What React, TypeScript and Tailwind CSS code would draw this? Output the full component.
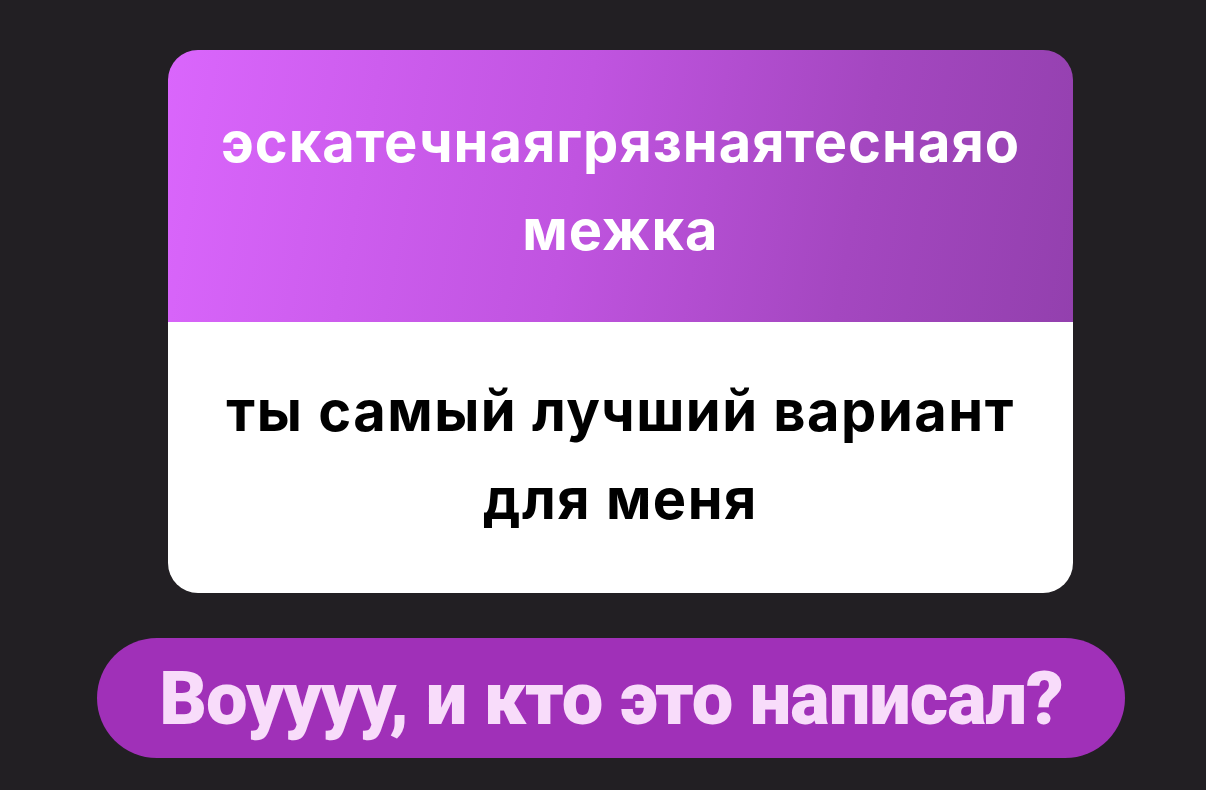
export default function App() {
  return (
    <div className="w-[1206px] h-[790px] bg-[#221f23] flex flex-col overflow-hidden" style={{ fontFamily: "Inter, 'Noto Sans', sans-serif" }}>
      <div className="mt-[50px] ml-[168px] w-[905px] h-[543px] rounded-[30px] overflow-hidden flex flex-col">
        <div className="h-[272px] bg-[linear-gradient(100deg,#da66fc_0%,#c054e0_45%,#a447c0_75%,#9340ae_100%)] flex items-center justify-center">
          <p className="text-white text-[56px] font-bold leading-[88px] text-center tracking-[1px]">
            эскатечнаягрязнаятеснаяо
            <br />
            межка
          </p>
        </div>
        <div className="flex-1 bg-white flex items-center justify-center">
          <p className="text-black text-[56px] font-bold leading-[88px] text-center tracking-[1.5px] -mt-[6px]">
            ты самый лучший вариант
            <br />
            для меня
          </p>
        </div>
      </div>
      <div className="mt-[45px] ml-[97px] w-[1028px] h-[120px] rounded-full bg-[#a030b8] flex items-center justify-center">
        <p className="text-[#f8dcfa] text-[74px] font-black tracking-[-1px]" style={{ fontFamily: "Roboto, sans-serif" }}>
          Воуууу, и кто это написал?
        </p>
      </div>
    </div>
  );
}
